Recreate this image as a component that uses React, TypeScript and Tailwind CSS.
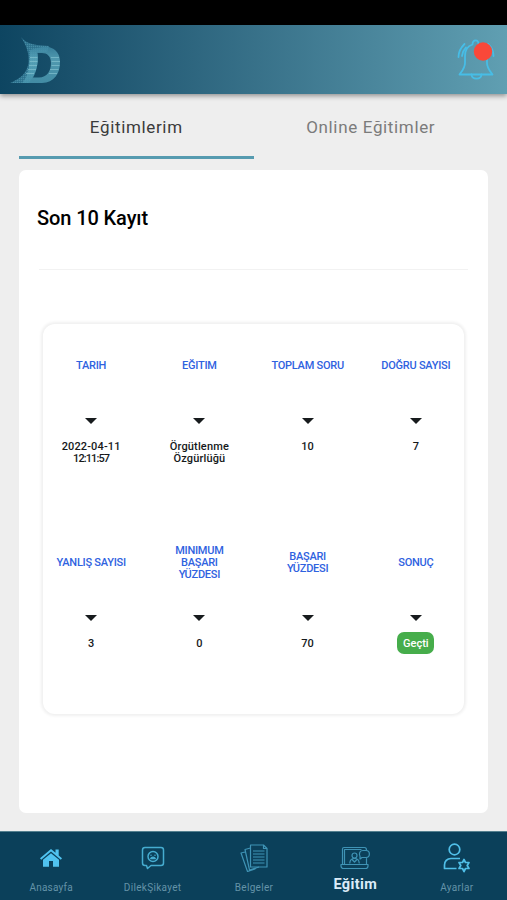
import React, { useState } from "react";

interface Cell {
  title: string[];
  value: string[];
  badge?: boolean;
}

const rows: Cell[][] = [
  [
    { title: ["TARIH"], value: ["2022-04-11", "12:11:57"] },
    { title: ["EĞITIM"], value: ["Örgütlenme", "Özgürlüğü"] },
    { title: ["TOPLAM SORU"], value: ["10"] },
    { title: ["DOĞRU SAYISI"], value: ["7"] },
  ],
  [
    { title: ["YANLIŞ SAYISI"], value: ["3"] },
    { title: ["MINIMUM", "BAŞARI", "YÜZDESI"], value: ["0"] },
    { title: ["BAŞARI", "YÜZDESI"], value: ["70"] },
    { title: ["SONUÇ"], value: ["Geçti"], badge: true },
  ],
];

const Logo = () => (
  <svg width="54" height="50" viewBox="0 0 54 50">
    <defs>
      <linearGradient id="fade" x1="0" y1="0" x2="0" y2="1">
        <stop offset="0" stopColor="#3c86a2" />
        <stop offset="0.35" stopColor="#5aa6bb" />
        <stop offset="1" stopColor="#4a97af" />
      </linearGradient>
      <pattern id="dots" width="2" height="2" patternUnits="userSpaceOnUse">
        <rect width="2" height="2" fill="#2d7491" />
        <rect width="1.3" height="1.3" fill="#4f97b0" />
      </pattern>
    </defs>
    <path
      d="M12 1C16 6 21 8 28 9L40 10L38 16H28C30 24 28 35 23 42L20 47L1 47C3 46.500 5 45 7 44C13 41 18 36 19.500 27C20.500 17 17 9 12 1Z"
      fill="url(#dots)"
      opacity="0.85"
    />
    <path
      d="M21 14C29 12 34 10 40 11C47 13 51 18 51 26C51 38 45 46.500 33 47H13C18 42 20 34 20.500 27C21 21 21 17 21 14Z
      M28.500 17C29.500 25 28 35 24 41.500H30C38 41.500 42 35 42 27C42 20 38 17 33 17Z"
      fillRule="evenodd"
      fill="url(#fade)"
      opacity="0.85"
    />
    <path
      d="M21 21.500H28.500M20.500 25.500H28.500M20 29.500H28M19 33.500H27M17 37.500H25M42 21.500H50M42.500 25.500H51M42.500 29.500H50.500M41 33.500H49.500M40 37.500H48"
      stroke="#83c2d0"
      strokeWidth="1"
      opacity="0.7"
    />
  </svg>
);

const Bell = () => (
  <svg
    width="38"
    height="42"
    viewBox="0 0 38 42"
    fill="none"
    stroke="#47bde6"
    strokeWidth="1.8"
    strokeLinecap="round"
    strokeLinejoin="round"
  >
    <path d="M15.500 5.500C15.500 0 21.500 0 21.500 5.500C27 7 30 12 30 18V24C30 29 33 32 35.500 35.500H2.500C5 32 8 29 8 24V17C8 11 11 7 15.500 5.500" />
    <path d="M14.500 35.500C15 41 24 41 24.500 35.500M7.500 5C4 8.500 1.500 12 1.500 18M9 8.500C6.500 11 5.500 13.500 5 17M31 5C34.500 8 36.500 12 36.500 17" />
    <circle cx="26" cy="12.500" r="9.200" fill="#f94839" stroke="none" />
  </svg>
);

const HomeIcon = () => (
  <svg width="24" height="22" viewBox="0 0 24 22" fill="#50c3f0">
    <path d="M12 2L1 11.300L2.200 12.700L12 4.600L21.800 12.700L23 11.300L19.700 8.500V2.500H16.500V5.800Z" />
    <path d="M12 6.200L4 12.800V19.700H10V14H14V19.700H20V12.800Z" />
  </svg>
);

const ChatIcon = () => (
  <svg
    width="24"
    height="24"
    viewBox="0 0 24 24"
    fill="none"
    stroke="#46acd0"
    strokeWidth="1.500"
    strokeLinejoin="round"
    strokeLinecap="round"
  >
    <path d="M4 1.500H20C21.500 1.500 22.500 2.500 22.500 4V17C22.500 18.500 21.500 19.500 20 19.500H10L6.500 22.500L5.500 19.500H4C2.500 19.500 1.500 18.500 1.500 17V4C1.500 2.500 2.500 1.500 4 1.500Z" />
    <circle cx="12" cy="10.500" r="5" />
    <path d="M10 9.200V9.300M14 9.200V9.300M9.800 12.500C10.500 10.800 13.500 10.800 14.200 12.500Z" />
  </svg>
);

const DocsIcon = () => (
  <svg
    width="28"
    height="28"
    viewBox="0 0 28 28"
    fill="none"
    stroke="#3f93b5"
    strokeWidth="1.200"
    strokeLinejoin="round"
  >
    <path d="M10.500 1H23.500L27 4.500V23H10.500ZM23.500 1V4.500H27" />
    <path d="M13 7H24.500M13 10H24.500M13 13H24.500M13 16H24.500M13 19H24.500" />
    <path d="M10.500 4L5 5.500L9.500 26L19 23M5 8L1 9L7.500 27.500L16 24.500" />
  </svg>
);

const LaptopIcon = () => (
  <svg
    width="30"
    height="24"
    viewBox="0 0 30 24"
    fill="none"
    stroke="#3f93b5"
    strokeWidth="1.200"
    strokeLinejoin="round"
    strokeLinecap="round"
  >
    <path d="M2.500 18.500V3C2.500 2 3 1.500 4 1.500H24.500C26 1.500 26.500 2.500 26.500 4M26.500 12.500V18.500M4.500 18.500V3.500H21M1 18.500H28V20C28 21.500 27 22.500 25.500 22.500H3.500C2 22.500 1 21.500 1 20Z" />
    <circle cx="14.500" cy="9.500" r="2.500" />
    <path d="M9.800 17C10 14 12 12.500 14.500 12.500S19 14 19.200 17M12.500 14L14.500 16L16.500 14" />
    <path d="M23 4.500H26C30.500 4.500 30.500 11.500 26 11.500H22L20 13V10.500C18.500 7 20 4.500 23 4.500Z" />
  </svg>
);

const UserGearIcon = () => (
  <svg
    width="28"
    height="30"
    viewBox="0 0 28 30"
    fill="none"
    stroke="#50bfe8"
    strokeWidth="1.700"
    strokeLinejoin="round"
  >
    <circle cx="11.500" cy="6.500" r="5.300" />
    <path d="M17 15.500H8C4 15.500 1.500 18.500 1.500 22V25.500H13.500" />
    <path d="M21 16.500L22.500 19.500L26 19.500L24.200 22.500L26 25.500L22.500 25.500L21 28.500L19.500 25.500L16 25.500L17.800 22.500L16 19.500L19.500 19.500Z" />
  </svg>
);

const navItems = [
  { label: "Anasayfa", icon: <HomeIcon />, track: "tracking-[0.2px]" },
  { label: "DilekŞikayet", icon: <ChatIcon />, track: "tracking-[0.3px]" },
  { label: "Belgeler", icon: <DocsIcon />, track: "tracking-[0.3px]" },
  { label: "Eğitim", icon: <LaptopIcon />, track: "tracking-[0.4px]" },
  { label: "Ayarlar", icon: <UserGearIcon />, track: "tracking-[0.3px]" },
];

const RecordCell = ({ cell }: { cell: Cell }) => (
  <div className="flex flex-col items-center text-center text-[11px] leading-3 font-medium">
    <div className="flex h-9 flex-col justify-center whitespace-nowrap text-[11px] tracking-[-0.25px] text-[#2f62df]">
      {cell.title.map((line) => (
        <span key={line}>{line}</span>
      ))}
    </div>
    <svg className="mt-[34px]" width="12" height="6" viewBox="0 0 12 6">
      <path d="M0 0H12L6 6Z" fill="#171b1d" />
    </svg>
    {cell.badge ? (
      <span className="mt-[11px] flex h-[22px] w-[37px] items-center justify-center rounded-[7px] bg-[#46ad4b] pt-[1px] text-[11px] text-white">
        {cell.value[0]}
      </span>
    ) : (
      <div className="mt-[17px] flex flex-col text-[#16191b]">
        {cell.value.map((line) => (
          <span
            key={line}
            className={line.includes(":") ? "tracking-[-0.9px]" : "tracking-[0.15px]"}
          >
            {line}
          </span>
        ))}
      </div>
    )}
  </div>
);

const App: React.FC = () => {
  const [tab, setTab] = useState(0);
  const [active, setActive] = useState("Eğitim");

  return (
    <div className="flex h-[900px] w-[507px] flex-col overflow-hidden bg-[#eeeeee] font-['Roboto',sans-serif]">
      <div className="h-[25px] shrink-0 bg-black" />
      <header className="flex h-[69px] shrink-0 items-start justify-between bg-linear-to-r from-[#0d4561] to-[#609fb2] pt-[11px] pr-[12px] pl-[9px] shadow-[0_2px_5px_rgba(0,0,0,0.4)]">
        <Logo />
        <button className="mt-[3px]">
          <Bell />
        </button>
      </header>

      <div className="mx-[19px] grid h-[65px] shrink-0 grid-cols-2 text-[17px] tracking-[0.65px]">
        {["Eğitimlerim", "Online Eğitimler"].map((name, i) => (
          <button
            key={name}
            onClick={() => setTab(i)}
            className={
              tab === i
                ? "border-b-[3px] border-[#569bb0] pt-[5px] text-[#3b3b3b]"
                : "border-b-[3px] border-transparent pt-[5px] text-[#7b7b7b]"
            }
          >
            {name}
          </button>
        ))}
      </div>

      <main className="mx-[19px] mt-[11px] h-[643px] shrink-0 rounded-[7px] bg-white pt-[34px]">
        <h1 className="ml-[18px] text-[20px] leading-7 font-medium tracking-[-0.1px] text-black">
          Son 10 Kayıt
        </h1>
        <hr className="mx-[20px] mt-[37px] border-[#f2f2f2]" />
        <section className="mx-[24px] mt-[54px] h-[390px] rounded-[12px] bg-white pt-[24px] shadow-[0_0_3px_2px_#f0f0f0]">
          {rows.map((row, i) => (
            <div key={i} className="-mx-[6px] grid h-[197px] grid-cols-4">
              {row.map((cell) => (
                <RecordCell key={cell.title.join(" ")} cell={cell} />
              ))}
            </div>
          ))}
        </section>
      </main>

      <nav className="mt-auto grid h-[69px] shrink-0 grid-cols-5 border-t border-[#55808f] bg-[#0b405a]">
        {navItems.map(({ label, icon, track }) => (
          <button
            key={label}
            onClick={() => setActive(label)}
            className="flex flex-col items-center justify-start pl-[1px]"
          >
            <span className="mt-[10px] flex h-[32px] items-center">{icon}</span>
            {active === label ? (
              <span
                className={`mt-[1px] text-[14.5px] leading-5 font-bold text-[#dcecf8] ${track}`}
              >
                {label}
              </span>
            ) : (
              <span className={`mt-[8px] text-[10px] leading-3 text-[#6493a8] ${track}`}>
                {label}
              </span>
            )}
          </button>
        ))}
      </nav>
    </div>
  );
};

export default App;
